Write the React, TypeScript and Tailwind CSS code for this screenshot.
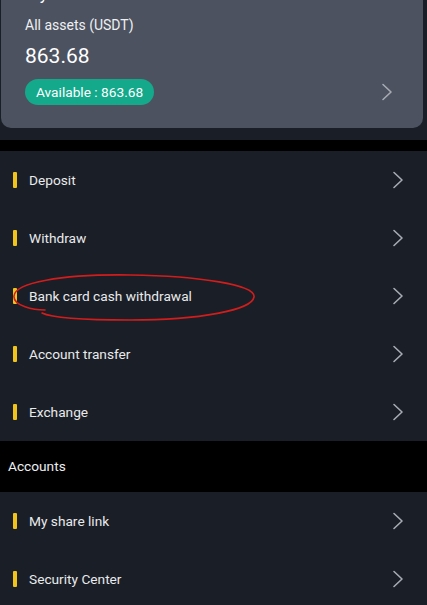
import React from "react";

const Chevron = ({ className = "" }: { className?: string }) => (
  <svg className={className} width="12" height="18" viewBox="0 0 12 18" fill="none">
    <path d="M2 1.5 L10 9 L2 16.5" stroke="#a7abb2" strokeWidth="1.6" strokeLinecap="round" strokeLinejoin="round" />
  </svg>
);

const Row = ({ label }: { label: string }) => (
  <div className="flex h-[58px] items-center pl-[13px] pr-[23px]">
    <div className="h-[16px] w-[4px] rounded-[1px] bg-[#f2c318]" />
    <div className="ml-[12px] flex-1 text-[13.7px] text-[#e9eaec]">{label}</div>
    <Chevron />
  </div>
);

export default function App() {
  return (
    <div
      className="relative h-[605px] w-[427px] overflow-hidden bg-[#1a1e26]"
      style={{ fontFamily: "Roboto, 'Noto Sans', sans-serif" }}
    >
      <div className="ml-[1px] mr-[4px] -mt-[22px] h-[150px] rounded-b-[10px] bg-[#4c5260] pl-[24px] pr-[30px]">
        <div className="h-[26px] pt-[6px] text-[17px] leading-[20px] text-white">My assets</div>
        <div className="mt-[12px] text-[14px] leading-[18px] text-[#eef0f2]">All assets (USDT)</div>
        <div className="mt-[10px] text-[21px] leading-[24px] text-white">863.68</div>
        <div className="mt-[11px] flex items-center justify-between">
          <div className="flex h-[26px] items-center rounded-full bg-[#14a98b] px-[11px] text-[13.7px] text-white">
            Available : 863.68
          </div>
          <Chevron />
        </div>
      </div>
      <div className="mt-[12px] h-[11px] bg-black" />
      <div className="bg-[#1a1e26]">
        <Row label="Deposit" />
        <Row label="Withdraw" />
        <Row label="Bank card cash withdrawal" />
        <Row label="Account transfer" />
        <Row label="Exchange" />
      </div>
      <div className="flex h-[51px] items-center bg-black pl-[8px] text-[13.7px] text-[#eceef0]">Accounts</div>
      <div className="bg-[#1a1e26]">
        <Row label="My share link" />
        <Row label="Security Center" />
      </div>
      <svg className="pointer-events-none absolute left-0 top-0" width="427" height="605" viewBox="0 0 427 605" fill="none">
        <path
          d="M45 310 C34 310 13 306 14 296 C15 283 60 274 130 275 C200 276 256 285 254 297 C252 310 200 320 130 320 C85 320 52 318 42 313"
          stroke="#d21d1d"
          strokeWidth="1.6"
          strokeLinecap="round"
        />
      </svg>
    </div>
  );
}
